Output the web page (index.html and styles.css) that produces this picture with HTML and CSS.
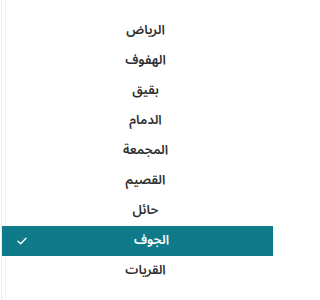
FILE: index.html
```html
<!DOCTYPE html>
<html lang="ar">
<head>
<meta charset="utf-8">
<link rel="stylesheet" href="styles.css">
</head>
<body>
<div class="menu">
  <ul class="list">
    <li class="item"><span dir="rtl">الرياض</span></li>
    <li class="item"><span dir="rtl">الهفوف</span></li>
    <li class="item"><span dir="rtl">بقيق</span></li>
    <li class="item"><span dir="rtl">الدمام</span></li>
    <li class="item"><span dir="rtl">المجمعة</span></li>
    <li class="item"><span dir="rtl">القصيم</span></li>
    <li class="item"><span dir="rtl">حائل</span></li>
    <li class="item selected"><svg class="check" width="10" height="8" viewBox="0 0 10 8"><path d="M1 4.2 L3.7 6.8 L9 1.2" fill="none" stroke="#fff" stroke-width="1.4" stroke-linecap="round" stroke-linejoin="round"/></svg><span dir="rtl">الجوف</span></li>
    <li class="item"><span dir="rtl">القريات</span></li>
  </ul>
</div>
</body>
</html>
```
FILE: styles.css
```css
html, body {
  margin: 0;
  padding: 0;
  background: #ffffff;
}
.menu {
  width: 272px;
  height: 300px;
  margin-left: 1px;
  border-left: 1px solid #ececec;
  box-sizing: border-box;
  box-shadow: inset 3px 0 0 #fff, inset 4px 0 0 #f4f4f4;
  overflow: hidden;
}
.list {
  list-style: none;
  margin: 0;
  padding: 16px 0 0 0;
}
.item {
  position: relative;
  height: 30px;
  box-sizing: border-box;
  padding-left: 16px;
  display: flex;
  align-items: center;
  justify-content: center;
  font-family: "Noto Sans Arabic", "DejaVu Sans", sans-serif;
  font-size: 13px;
  font-weight: 600;
  color: #2e2e2e;
}
.item span {
  position: relative;
  top: -1px;
}
.item.selected {
  background: #0f7a89;
  color: #ffffff;
  margin-left: -2px;
  padding-left: 30px;
}
.check {
  position: absolute;
  left: 17px;
  top: 11px;
}
```
